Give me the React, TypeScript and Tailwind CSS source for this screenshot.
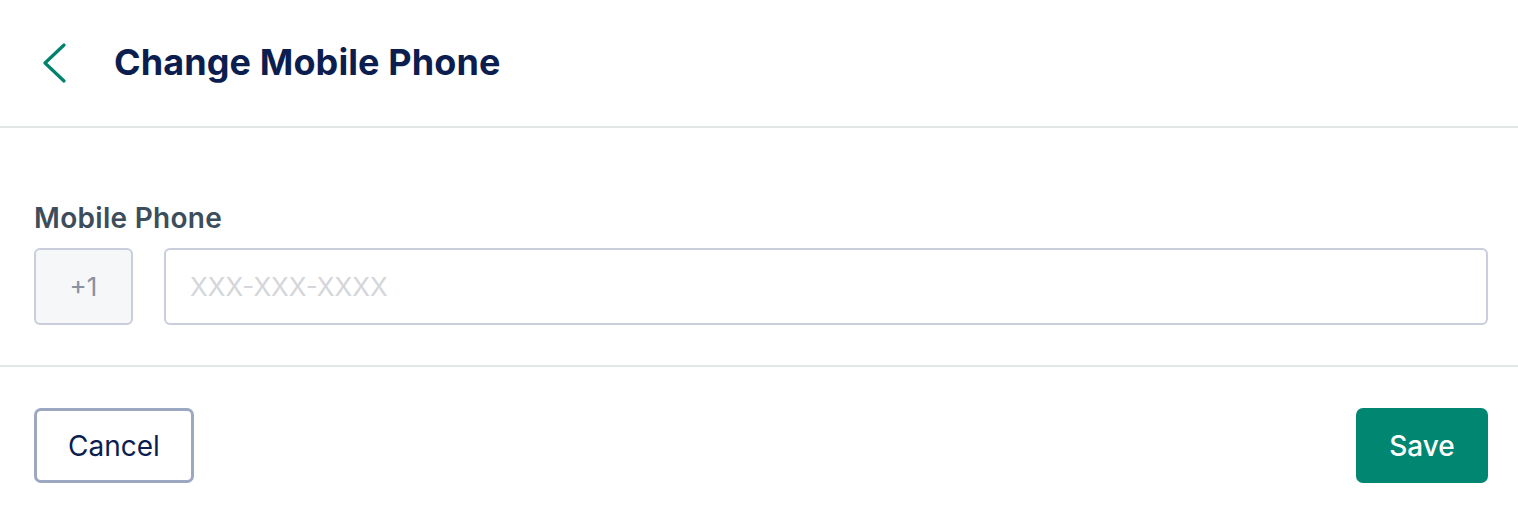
export default function App() {
  return (
    <div className="w-full min-h-screen bg-white font-['Inter',sans-serif]">
      <header className="h-[128px] flex items-center border-b-2 border-[#e3e6e6] pl-[42px]">
        <button className="w-[24px] h-[40px] flex items-center text-[#00836d]" aria-label="Back">
          <svg width="24" height="40" viewBox="0 0 24 40" fill="none">
            <path d="M22 2 L3 20 L22 38" stroke="currentColor" strokeWidth="3.2" strokeLinecap="round" strokeLinejoin="round" />
          </svg>
        </button>
        <h1 className="ml-[48px] -mt-[2px] text-[36px] font-bold text-[#0b1e4f] tracking-[0.1px]">
          Change Mobile Phone
        </h1>
      </header>

      <div className="pl-[34px] pr-[30px] pt-[73px] pb-[40px] border-b-2 border-[#e3e6e6]">
        <label className="block text-[28px] font-semibold text-[#3c4e5b] leading-[34px] tracking-[0.3px]">
          Mobile Phone
        </label>
        <div className="mt-[13px] flex gap-[31px]">
          <div className="w-[99px] h-[77px] flex items-center justify-center rounded-[6px] border-2 border-[#c9cddc] bg-[#f5f7f9] text-[26px] text-[#8a929e]">
            +1
          </div>
          <input
            className="flex-1 h-[77px] rounded-[6px] border-2 border-[#c9cddc] px-[24px] text-[26px] text-[#0b1e4f] placeholder:text-[#d4d6d9] outline-none"
            placeholder="XXX-XXX-XXXX"
          />
        </div>
      </div>

      <div className="pl-[34px] pr-[30px] pt-[41px] flex justify-between">
        <button className="w-[160px] h-[75px] rounded-[7px] border-[3px] border-[#9ca7c1] text-[28px] text-[#0b1e4f]">
          Cancel
        </button>
        <button className="w-[132px] h-[75px] rounded-[7px] bg-[#008671] text-[28px] font-medium text-white">
          Save
        </button>
      </div>
    </div>
  );
}
